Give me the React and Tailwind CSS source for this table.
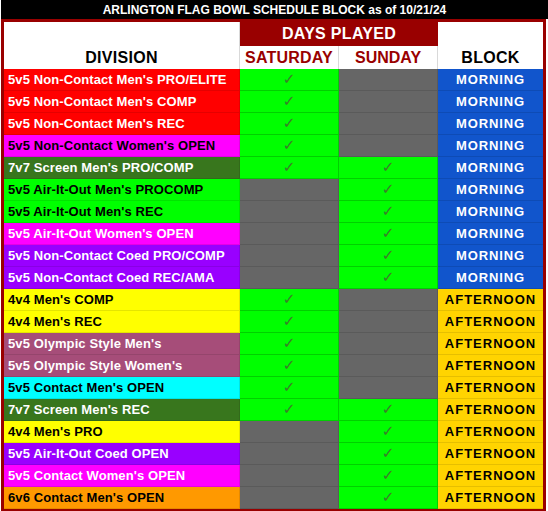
import React from "react";

const RED = "bg-[#ff0000] text-white";
const MAG_B = "bg-[#ff00ff] text-black";
const MAG_W = "bg-[#ff00ff] text-white";
const DKG = "bg-[#38761d] text-white";
const GRN = "bg-[#00ff00] text-black";
const PUR = "bg-[#9900ff] text-white";
const YEL = "bg-[#ffff00] text-black";
const OLY = "bg-[#a64d79] text-white";
const CYA = "bg-[#00ffff] text-black";
const ORA = "bg-[#ff9900] text-black";

const rows = [
  ["5v5 Non-Contact Men's PRO/ELITE", RED, 1, 0, "M"],
  ["5v5 Non-Contact Men's COMP", RED, 1, 0, "M"],
  ["5v5 Non-Contact Men's REC", RED, 1, 0, "M"],
  ["5v5 Non-Contact Women's OPEN", MAG_B, 1, 0, "M"],
  ["7v7 Screen Men's PRO/COMP", DKG, 1, 1, "M"],
  ["5v5 Air-It-Out Men's PROCOMP", GRN, 0, 1, "M"],
  ["5v5 Air-It-Out Men's REC", GRN, 0, 1, "M"],
  ["5v5 Air-It-Out Women's OPEN", MAG_W, 0, 1, "M"],
  ["5v5 Non-Contact Coed PRO/COMP", PUR, 0, 1, "M"],
  ["5v5 Non-Contact Coed REC/AMA", PUR, 0, 1, "M"],
  ["4v4 Men's COMP", YEL, 1, 0, "A"],
  ["4v4 Men's REC", YEL, 1, 0, "A"],
  ["5v5 Olympic Style Men's", OLY, 1, 0, "A"],
  ["5v5 Olympic Style Women's", OLY, 1, 0, "A"],
  ["5v5 Contact Men's OPEN", CYA, 1, 0, "A"],
  ["7v7 Screen Men's REC", DKG, 1, 1, "A"],
  ["4v4 Men's PRO", YEL, 0, 1, "A"],
  ["5v5 Air-It-Out Coed OPEN", PUR, 0, 1, "A"],
  ["5v5 Contact Women's OPEN", MAG_W, 0, 1, "A"],
  ["6v6 Contact Men's OPEN", ORA, 0, 1, "A"],
];

function Day({ on }) {
  return on ? (
    <div className="h-full w-[99px] border-r border-b border-[#00d000] bg-[#00ff00] flex items-center justify-center text-[15px] leading-none text-[#3d7a2c] font-['DejaVu_Sans',sans-serif]">
      ✓
    </div>
  ) : (
    <div className="h-full w-[99px] border-r border-b border-[#5a5a5a] bg-[#666666]" />
  );
}

export default function App() {
  return (
    <div className="w-[548px] h-[511px] bg-white font-['Liberation_Sans',Arial,sans-serif] overflow-hidden">
      <div className="ml-[1px] w-[547px] h-[19px] bg-black text-white font-bold text-[12px] leading-[20px] text-center">
        ARLINGTON FLAG BOWL SCHEDULE BLOCK as of 10/21/24
      </div>
      <div className="ml-[1px] w-[545px] border-[3px] border-[#990000] bg-white">
        <div className="flex h-[47px]">
          <div className="w-[236px] border-r border-[#d9d9d9] flex items-end justify-center text-[16px] font-bold text-black leading-[22px] tracking-[0.3px]">
            DIVISION
          </div>
          <div className="w-[198px] flex flex-col">
            <div className="h-[24px] bg-[#990000] text-white font-bold text-[16px] leading-[24px] text-center tracking-[0.3px]">
              DAYS PLAYED
            </div>
            <div className="flex h-[23px] text-[#990000] font-bold text-[16px] leading-[23px]">
              <div className="w-[99px] border-r border-[#d9d9d9] text-center tracking-[0.2px]">SATURDAY</div>
              <div className="w-[99px] border-r border-[#d9d9d9] text-center">SUNDAY</div>
            </div>
          </div>
          <div className="w-[105px] flex items-end justify-center text-[16px] font-bold text-black leading-[22px] tracking-[0.3px]">
            BLOCK
          </div>
        </div>
        {rows.map(([name, cls, sat, sun, blk], i) => (
          <div key={i} className="flex h-[22px]">
            <div
              className={`w-[236px] h-full border-r border-b border-black/10 pl-[4px] flex items-center text-[13px] font-bold whitespace-nowrap tracking-[0.1px] ${cls}`}
            >
              {name}
            </div>
            <Day on={sat} />
            <Day on={sun} />
            {blk === "M" ? (
              <div className="w-[105px] h-full border-b border-[#0e4bb5] bg-[#1155cc] text-white flex items-center justify-center text-[13px] font-bold tracking-[0.9px]">
                MORNING
              </div>
            ) : (
              <div className="w-[105px] h-full border-b border-[#e6bf00] bg-[#ffd400] text-black flex items-center justify-center text-[13px] font-bold tracking-[1px]">
                AFTERNOON
              </div>
            )}
          </div>
        ))}
      </div>
    </div>
  );
}
